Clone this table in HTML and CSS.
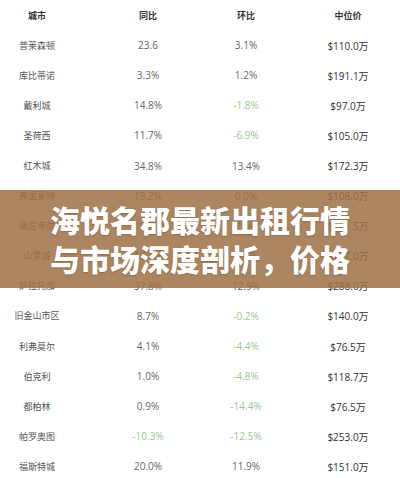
FILE: index.html
```html
<!DOCTYPE html>
<html lang="zh-CN">
<head>
<meta charset="utf-8">
<title>海悦名郡最新出租行情</title>
<link rel="stylesheet" href="styles.css">
</head>
<body>
<div class="page">
  <div class="table">
    <div class="row head"><span class="c1">城市</span><span class="c2">同比</span><span class="c3">环比</span><span class="c4">中位价</span></div>
    <div class="row"><span class="c1">普莱森顿</span><span class="c2">23.6</span><span class="c3">3.1%</span><span class="c4">$110.0万</span></div>
    <div class="row"><span class="c1">库比蒂诺</span><span class="c2">3.3%</span><span class="c3">1.2%</span><span class="c4">$191.1万</span></div>
    <div class="row"><span class="c1">戴利城</span><span class="c2">14.8%</span><span class="c3 neg">-1.8%</span><span class="c4">$97.0万</span></div>
    <div class="row"><span class="c1">圣荷西</span><span class="c2">11.7%</span><span class="c3 neg">-6.9%</span><span class="c4">$105.0万</span></div>
    <div class="row"><span class="c1">红木城</span><span class="c2">34.8%</span><span class="c3">13.4%</span><span class="c4">$172.3万</span></div>
    <div class="row"><span class="c1">弗里蒙特</span><span class="c2">19.2%</span><span class="c3">0.0%</span><span class="c4">$108.0万</span></div>
    <div class="row"><span class="c1">桑尼韦尔</span><span class="c2">10.5%</span><span class="c3">2.6%</span><span class="c4">$181.5万</span></div>
    <div class="row"><span class="c1">山景城</span><span class="c2">16.4%</span><span class="c3">5.3%</span><span class="c4">$207.0万</span></div>
    <div class="row"><span class="c1">萨拉托加</span><span class="c2">37.8%</span><span class="c3">12.9%</span><span class="c4">$288.0万</span></div>
    <div class="row"><span class="c1">旧金山市区</span><span class="c2">8.7%</span><span class="c3 neg">-0.2%</span><span class="c4">$140.0万</span></div>
    <div class="row"><span class="c1">利弗莫尔</span><span class="c2">4.1%</span><span class="c3 neg">-4.4%</span><span class="c4">$76.5万</span></div>
    <div class="row"><span class="c1">伯克利</span><span class="c2">1.0%</span><span class="c3 neg">-4.8%</span><span class="c4">$118.7万</span></div>
    <div class="row"><span class="c1">都柏林</span><span class="c2">0.9%</span><span class="c3 neg">-14.4%</span><span class="c4">$76.5万</span></div>
    <div class="row"><span class="c1">帕罗奥图</span><span class="c2 neg">-10.3%</span><span class="c3 neg">-12.5%</span><span class="c4">$253.0万</span></div>
    <div class="row"><span class="c1">福斯特城</span><span class="c2">20.0%</span><span class="c3">11.9%</span><span class="c4">$151.0万</span></div>
  </div>
  <div class="banner">
    <div class="title">海悦名郡最新出租行情<br>与市场深度剖析，价格</div>
  </div>
</div>
</body>
</html>
```
FILE: styles.css
```css
html, body {
  margin: 0;
  padding: 0;
  background: #ffffff;
}
.page {
  position: relative;
  width: 400px;
  height: 478px;
  overflow: hidden;
  font-family: "Open Sans", "Noto Sans CJK SC", sans-serif;
}
.table {
  display: flex;
  flex-direction: column;
  padding-top: 0;
}
.row {
  display: grid;
  grid-template-columns: 74px 122px 100px 104px;
  height: 30.1px;
  align-items: center;
  font-size: 10px;
  color: #666;
}
.row span {
  text-align: center;
  white-space: nowrap;
}
.row .c1 {
  font-family: "Noto Sans CJK SC", sans-serif;
  font-size: 9px;
  color: #555;
}
.row .c2 {
  padding-left: 26px;
}
.row .c4 {
  color: #333;
  font-size: 10px;
}
.row .neg {
  color: #9cc597;
}
.row.head span {
  font-family: "Noto Sans CJK SC", sans-serif;
  font-weight: 700;
  font-size: 9px;
  color: #333;
}
.banner {
  position: absolute;
  left: 0;
  top: 190px;
  width: 400px;
  height: 98px;
  background: rgba(158, 114, 71, 0.86);
  box-sizing: border-box;
  padding: 10px 0 0 50px;
}
.title {
  font-family: "Noto Sans CJK SC", sans-serif;
  font-weight: 900;
  font-size: 30px;
  line-height: 39px;
  color: #ffffff;
  white-space: nowrap;
  text-shadow: 0 1px 2px rgba(60, 35, 10, 0.25);
}
```
